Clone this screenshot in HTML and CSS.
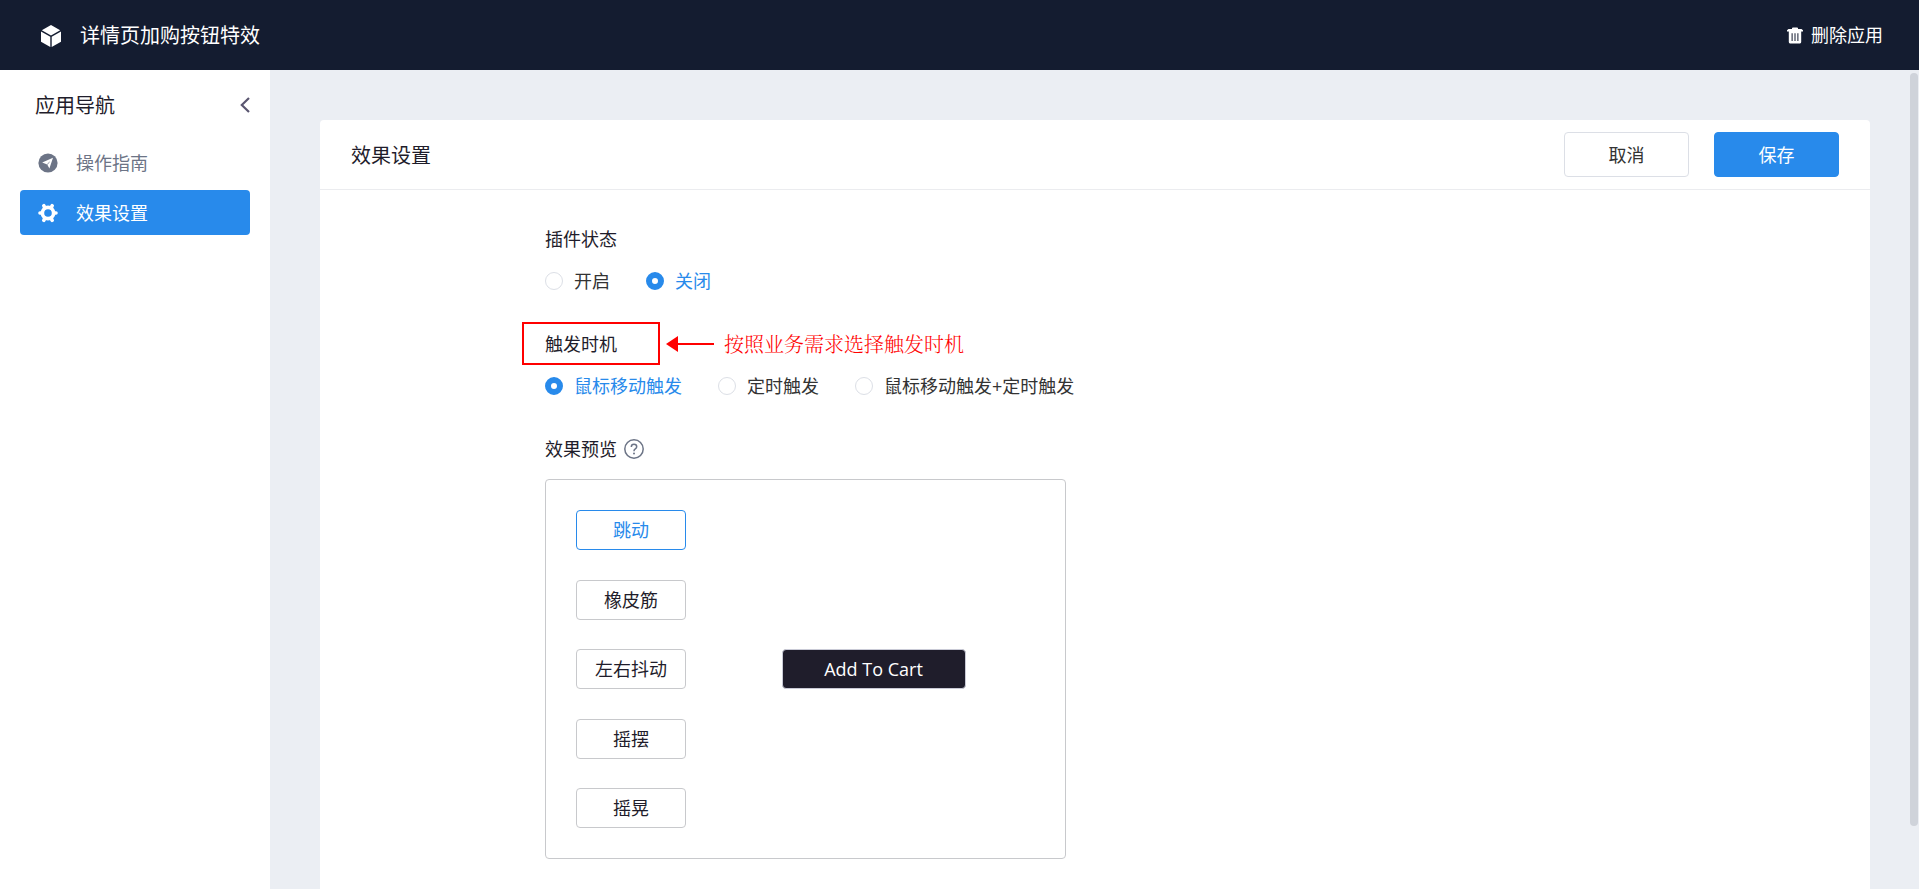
FILE: index.html
```html
<!DOCTYPE html>
<html lang="zh-CN">
<head>
<meta charset="utf-8">
<title>详情页加购按钮特效</title>
<link rel="stylesheet" href="styles.css">
</head>
<body>
<header class="topbar">
  <div class="brand">
    <svg class="brand-icon" viewBox="0 0 20 22" aria-hidden="true"><path fill="currentColor" d="M10 0 19.2 5.2 10 10.4 0.8 5.2ZM0 6.4 9.3 11.7V22L0 16.8ZM20 6.4 10.7 11.7V22L20 16.8Z"/></svg>
    <span>详情页加购按钮特效</span>
  </div>
  <button class="delete-app" type="button">
    <svg class="trash-icon" viewBox="0 0 16 17" aria-hidden="true"><path fill="currentColor" fill-rule="evenodd" d="M5 1.2Q5 .4 6 .4H10Q11 .4 11 1.2V2H14.5L16 3.2V4.6H14.2V15Q14.2 16.4 13 16.4H3Q1.8 16.4 1.8 15V4.6H0V3.2L1.5 2H5ZM4.6 6.2V14H5.6V6.2ZM7.5 6.2V14H8.5V6.2ZM10.4 6.2V14H11.4V6.2Z"/></svg>
    <span>删除应用</span>
  </button>
</header>
<div class="layout">
  <aside class="sidebar">
    <div class="sidebar-head">
      <h2 class="sidebar-title">应用导航</h2>
      <button class="collapse" type="button" aria-label="收起">
        <svg class="chevron" viewBox="0 0 10 16" aria-hidden="true"><path fill="none" stroke="currentColor" stroke-width="2.2" d="M9 1 1.8 8 9 15"/></svg>
      </button>
    </div>
    <nav class="nav">
      <a class="nav-item" href="#guide">
        <svg class="nav-icon" viewBox="0 0 20 20" aria-hidden="true"><circle cx="10" cy="10" r="9.6" fill="currentColor"/><path fill="#fff" d="M15 4.8 11.4 15.6 9.2 11.4 4.2 9.6Z"/><path stroke="currentColor" stroke-width=".8" d="M9.2 11.4 11.6 9"/></svg>
        <span>操作指南</span>
      </a>
      <a class="nav-item nav-item-active" href="#settings" aria-current="page">
        <svg class="nav-icon" viewBox="0 0 20 20" aria-hidden="true"><g fill="none" stroke="currentColor"><circle cx="10" cy="10" r="5.6" stroke-width="3.6"/><path stroke-width="3.6" stroke-linecap="round" d="M16 10H18M4 10H2M13.3 4.3 14.2 2.7M6.7 4.3 5.8 2.7M13.3 15.7 14.2 17.3M6.7 15.7 5.8 17.3"/></g></svg>
        <span>效果设置</span>
      </a>
    </nav>
  </aside>
  <main class="content">
    <section class="panel">
      <div class="panel-head">
        <h1 class="panel-title">效果设置</h1>
        <div class="actions">
          <button class="btn" type="button">取消</button>
          <button class="btn btn-primary" type="submit" form="effect-form">保存</button>
        </div>
      </div>
      <form class="form" id="effect-form">
        <fieldset class="group">
          <legend class="label">插件状态</legend>
          <div class="options">
            <label class="option"><input class="radio" type="radio" name="status"><span>开启</span></label>
            <label class="option"><input class="radio" type="radio" name="status" checked><span>关闭</span></label>
          </div>
        </fieldset>
        <fieldset class="group">
          <legend class="label">触发时机</legend>
          <div class="callout">
            <span class="callout-frame"></span>
            <svg class="callout-arrow" viewBox="0 0 48 16" aria-hidden="true"><path fill="currentColor" d="M0 8 12 0V7H48V9H12V16Z"/></svg>
            <span>按照业务需求选择触发时机</span>
          </div>
          <div class="options">
            <label class="option"><input class="radio" type="radio" name="trigger" checked><span>鼠标移动触发</span></label>
            <label class="option"><input class="radio" type="radio" name="trigger"><span>定时触发</span></label>
            <label class="option"><input class="radio" type="radio" name="trigger"><span>鼠标移动触发+定时触发</span></label>
          </div>
        </fieldset>
        <div class="group">
          <div class="label label-help">
            <span>效果预览</span>
            <svg class="help-icon" viewBox="0 0 20 20" aria-hidden="true"><g fill="none" stroke="currentColor" stroke-width="1.5"><circle cx="10" cy="10" r="9.2"/><path d="M7.3 8Q7.3 5.3 10 5.3T12.7 7.8Q12.7 9 11.3 9.9T10 12.2"/></g><circle cx="10" cy="14.4" r="1" fill="currentColor"/></svg>
          </div>
          <div class="preview">
            <div class="effects">
              <button class="effect effect-active" type="button">跳动</button>
              <button class="effect" type="button">橡皮筋</button>
              <button class="effect" type="button">左右抖动</button>
              <button class="effect" type="button">摇摆</button>
              <button class="effect" type="button">摇晃</button>
            </div>
            <div class="stage">
              <button class="cart" type="button">Add To Cart</button>
            </div>
          </div>
        </div>
      </form>
    </section>
    <div class="scroll-thumb"></div>
  </main>
</div>
</body>
</html>
```
FILE: styles.css
```css
* {
  box-sizing: border-box;
}

body {
  margin: 0;
  height: 100vh;
  display: flex;
  flex-direction: column;
  overflow: hidden;
  color: #1f1d2b;
  background: #ebeef3;
  font-family: "Open Sans", "Noto Sans CJK SC", sans-serif;
  font-size: 18px;
  line-height: 24px;
}

button {
  font: inherit;
  color: inherit;
  cursor: pointer;
}

h1,
h2 {
  margin: 0;
  padding-top: 2px;
  font-size: 20px;
  font-weight: 400;
}

svg {
  flex: none;
}

.topbar {
  flex: none;
  display: flex;
  align-items: center;
  justify-content: space-between;
  height: 70px;
  padding: 0 36px 0 41px;
  color: #fff;
  background: #141c30;
}

.brand {
  display: flex;
  align-items: center;
  gap: 19px;
  padding-top: 2px;
  font-size: 20px;
}

.brand-icon {
  width: 20px;
  height: 22px;
}

.delete-app {
  display: flex;
  align-items: center;
  gap: 8px;
  padding: 0;
  border: 0;
  background: none;
}

.trash-icon {
  width: 16px;
  height: 17px;
}

.layout {
  flex: 1;
  display: flex;
  min-height: 0;
}

.sidebar {
  flex: none;
  width: 270px;
  padding: 0 20px;
  background: #fff;
}

.sidebar-head {
  display: flex;
  align-items: center;
  justify-content: space-between;
  height: 70px;
  padding-left: 15px;
}

.collapse {
  display: flex;
  padding: 0;
  border: 0;
  color: #5a5670;
  background: none;
}

.chevron {
  width: 10px;
  height: 16px;
}

.nav {
  display: flex;
  flex-direction: column;
  gap: 5px;
}

.nav-item {
  display: flex;
  align-items: center;
  gap: 18px;
  height: 45px;
  padding: 0 18px;
  border-radius: 4px;
  color: #6c7486;
  text-decoration: none;
}

.nav-item-active {
  color: #fff;
  background: #288aeb;
}

.nav-icon {
  width: 20px;
  height: 20px;
}

.content {
  position: relative;
  flex: 1;
  display: flex;
  min-width: 0;
  padding: 50px 49px 0 50px;
}

.panel {
  flex: 1;
  min-width: 0;
  border-radius: 4px 4px 0 0;
  background: #fff;
}

.panel-head {
  display: flex;
  align-items: center;
  justify-content: space-between;
  height: 70px;
  padding: 0 31px;
  border-bottom: 1px solid #ebecef;
}

.actions {
  display: flex;
  gap: 25px;
}

.btn {
  width: 125px;
  height: 45px;
  border: 1px solid #dcdfe6;
  border-radius: 4px;
  color: #333;
  background: #fff;
}

.btn-primary {
  border-color: #288aeb;
  color: #fff;
  background: #288aeb;
}

.form {
  display: flex;
  flex-direction: column;
  gap: 39px;
  max-width: 1100px;
  margin: 0 auto;
  padding: 37px 0;
}

.group {
  position: relative;
  margin: 0;
  padding: 0;
  border: 0;
  min-width: 0;
}

.label {
  padding: 0;
  margin-bottom: 18px;
}

.label-help {
  display: flex;
  align-items: center;
  gap: 7px;
}

.help-icon {
  width: 20px;
  height: 20px;
  color: #6c7486;
}

.options {
  display: flex;
  gap: 36px;
}

.option {
  display: flex;
  align-items: center;
  gap: 11px;
  color: #333;
}

.option:has(:checked) {
  color: #288aeb;
}

.radio {
  appearance: none;
  width: 18px;
  height: 18px;
  margin: 0;
  border: 1px solid #dcdfe6;
  border-radius: 50%;
  background: #fff;
}

.radio:checked {
  border: 6px solid #288aeb;
}

/* Sits over the group's legend, above the row of options. */
.callout {
  position: absolute;
  top: -52px;
  left: -23px;
  display: flex;
  align-items: center;
  color: #f00;
  font-family: "Noto Serif CJK SC", SimSun, "Noto Sans CJK SC", serif;
  font-size: 20px;
  font-weight: 300;
  white-space: nowrap;
  pointer-events: none;
}

.callout-frame {
  width: 138px;
  height: 43px;
  border: 2px solid #f00;
}

.callout-arrow {
  width: 48px;
  height: 16px;
  margin: 0 10px 0 6px;
}

.preview {
  display: flex;
  max-width: 521px;
  padding: 30px;
  border: 1px solid #c8c9cc;
  border-radius: 4px;
  min-height: 380px;
}

.effects {
  display: flex;
  flex-direction: column;
  justify-content: space-between;
}

.effect {
  width: 110px;
  height: 40px;
  border: 1px solid #c8c9cc;
  border-radius: 4px;
  background: #fff;
}

.effect-active {
  border-color: #288aeb;
  color: #288aeb;
}

.stage {
  flex: 1;
  display: flex;
  align-items: center;
  justify-content: center;
  padding-left: 26px;
}

.cart {
  width: 184px;
  height: 40px;
  border: 1px solid #c9cad6;
  border-radius: 4px;
  color: #fff;
  background: #1f1d2b;
}

.scroll-thumb {
  position: absolute;
  top: 3px;
  right: 1px;
  width: 8px;
  height: 92%;
  border-radius: 4px;
  background: #cfd3da;
}
```
